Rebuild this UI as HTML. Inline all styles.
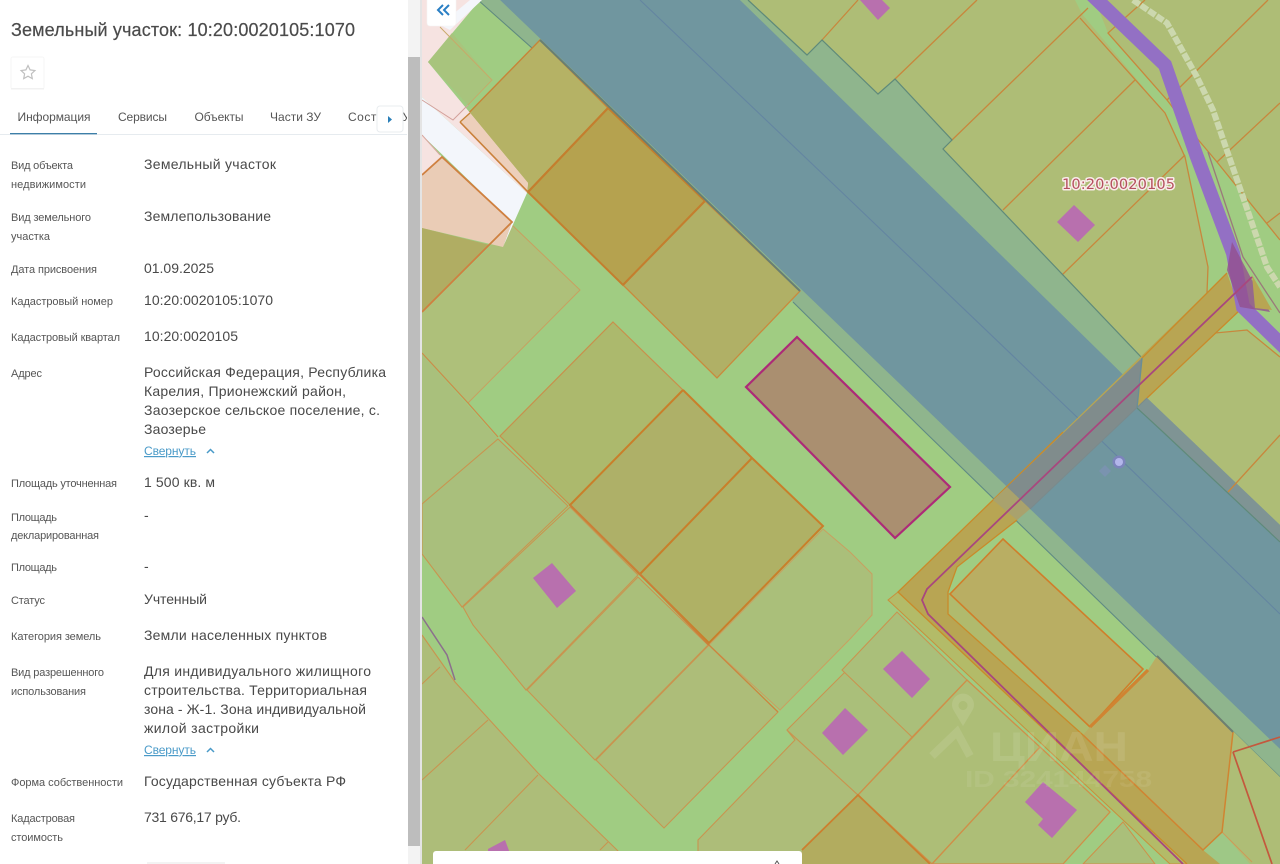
<!DOCTYPE html>
<html lang="ru"><head><meta charset="utf-8"><title>Земельный участок</title>
<style>
html,body{margin:0;padding:0;width:1280px;height:864px;overflow:hidden;background:#fff}
svg{display:block;position:absolute;left:0;top:0}
text{font-family:"Liberation Sans","Noto Sans CJK SC",sans-serif}
.l{font-size:11px;fill:#565656}
.v{font-size:14px;fill:#484848}
.t{font-size:12px;fill:#555}
.a{font-size:12px;fill:#4a9ac8;text-decoration:underline}
</style></head><body>
<svg width="1280" height="864" viewBox="0 0 1280 864" xmlns="http://www.w3.org/2000/svg">
<defs><clipPath id="mc"><rect x="422" y="0" width="858" height="864"/></clipPath>
<clipPath id="tc"><rect x="0" y="100" width="407" height="40"/></clipPath>
<filter id="b" x="0" y="0" width="100%" height="100%"><feGaussianBlur stdDeviation="0.3"/></filter>
<filter id="b2" x="-2%" y="-2%" width="104%" height="104%"><feGaussianBlur stdDeviation="0.25"/></filter></defs>

<g clip-path="url(#mc)"><g filter="url(#b)">
<rect x="422" y="0" width="858" height="864" fill="#a0cc82"/>

<!-- upper right parcels -->
<polygon points="748,0 807,55 822,40 878,94 895,79 952,140 943,149 1142,358 1227,273 1207,293 1208,267 1185,157 1165,113 1082,14 1075,0" fill="#aebd76"/>
<polygon points="1095,0 1280,0 1280,240 1217,162 1190,130 1167,100 1108,33" fill="#aebd76"/>
<polygon points="1147,398 1215,333 1247,330 1280,357 1280,525" fill="#aebd76"/>

<!-- teal strips + blue -->
<polygon points="740,0 748,0 807,55 822,40 878,94 895,79 952,140 943,149 1142,358 1137,408 1147,398 850,107" fill="#8fb58d"/>
<polygon points="478,0 500,0 1280,749 1280,777 925,432 793,302 532,48" fill="#8fb58d"/>
<polygon points="500,0 740,0 850,107 1147,398 1280,525 1280,749" fill="#70969f"/>
<polygon points="1137,408 1147,398 1280,525 1280,542" fill="#7f9494"/>
<polyline points="640,0 850,200 1080,420 1280,614" fill="none" stroke="#6485a1" stroke-width="1.1"/>
<polyline points="478,0 532,48" fill="none" stroke="#5f8a7f" stroke-width="1.1"/>
<polyline points="793,302 925,432 1280,777" fill="none" stroke="#5f8a84" stroke-width="1.1"/>

<!-- upper parcels lines -->
<g fill="none" stroke="#c8873c" stroke-width="1.3">
<polyline points="977,0 895,79"/><polyline points="1088,8 952,140"/><polyline points="1135,80 1003,210"/><polyline points="1185,155 1062,275"/>
<polyline points="1145,0 1108,33 1167,100 1190,130 1217,162 1280,240"/><polyline points="1268,0 1167,100"/><polyline points="1280,103 1217,162"/><polyline points="1280,213 1267,223"/>
<polyline points="858,0 822,40"/>
<polyline points="1080,18 1165,113 1185,157 1208,267 1207,293"/>
<polyline points="1215,333 1247,330 1280,357"/><polyline points="1280,435 1228,492"/>
</g>
<polyline points="1133,0 1167,23 1197,77 1213,110 1243,197 1267,267 1280,287" fill="none" stroke="#ccd8ae" stroke-width="6" stroke-dasharray="8 1.5"/>
<polyline points="748,0 807,55 822,40 878,94 895,79 952,140 943,149 1142,358 1137,408 1163,432 1280,542" fill="none" stroke="#5f8a7a" stroke-width="1.2"/>

<!-- NW row parcels -->
<polygon points="540,40 608,108 528,192 460,122" fill="#b5b265" stroke="#c78438" stroke-width="1.4"/>
<polygon points="608,108 705,201 623,285 528,192" fill="#b5a24f" stroke="#c47e2e" stroke-width="2"/>
<polygon points="705,201 800,291 717,378 623,285" fill="#b0b066" stroke="#c98a3e" stroke-width="1.3"/>
<polyline points="623,285 705,201" fill="none" stroke="#c47e2e" stroke-width="2"/>
<polyline points="528,192 608,108" fill="none" stroke="#c47e2e" stroke-width="2"/>
<polyline points="540,40 800,291" fill="none" stroke="#697f72" stroke-width="2"/>
<polygon points="512,225 580,290 468,403 422,353 422,313" fill="#aec07a"/>
<polyline points="512,225 580,290 468,403" fill="none" stroke="#c8a060" stroke-width="1"/>
<polyline points="422,353 468,403 498,437" fill="none" stroke="#cc8c48" stroke-width="1.2"/>
<polyline points="422,378 433,368" fill="none" stroke="#cc8c48" stroke-width="1"/>

<!-- unloaded tile area -->
<polygon points="422,0 480,0 428,62 528,183 527,193 422,97" fill="#f6e3e1"/>
<polygon points="470,0 482,0 450,30 440,25" fill="#f4f6fb"/>
<polygon points="422,97 527,193 503,247 512,222 422,135" fill="#f3f6fb"/>
<polygon points="422,135 442,157 422,175" fill="#f6e3e1"/>
<polygon points="442,157 512,222 503,247 422,228 422,175" fill="#eaccb6"/>
<polygon points="422,228 490,245 422,312" fill="#b0ad64"/>
<polyline points="422,175 442,157 512,222 422,312" fill="none" stroke="#cf8040" stroke-width="1.8"/>
<polygon points="452,33 492,80 468,105 428,62" fill="#a8c47d"/>
<polyline points="440,27 492,80 468,105" stroke="#c9a868" fill="none" stroke-width=".9"/>
<polyline points="422,100 453,120 468,105" stroke="#d3a09a" fill="none"/>
<polyline points="422,135 440,155" stroke="#d8a8a0" fill="none"/>
<polygon points="460,122 470,113 528,183 527,193" fill="#edcfbb"/>
<polyline points="460,122 528,192" fill="none" stroke="#c9803a" stroke-width="1.6"/>
<polyline points="460,122 470,113" fill="none" stroke="#c78438" stroke-width="1.4"/>

<!-- target -->
<polygon points="797,337 950,487 895,538 746,387" fill="#aa8f6f" stroke="#ad2b78" stroke-width="2.2"/>

<!-- middle parcels -->
<polygon points="613,322 683,390 570,505 500,436" fill="#acb96d" stroke="#c98f4c" stroke-width="1.2"/>
<polygon points="683,390 752,458 640,574 570,505" fill="#aeb067"/>
<polygon points="752,458 823,526 709,643 640,574" fill="#afb165"/>
<g fill="none" stroke="#c97f2c" stroke-width="2">
<polyline points="683,390 752,458 823,526 709,643 570,505 683,390"/>
<polyline points="752,458 640,574"/>
</g>
<polygon points="422,354 498,439 422,504" fill="#a9c07b"/>
<polygon points="498,439 568,506 462,607 422,554 422,504" fill="#a9bf7b" stroke="#c99450" stroke-width="1.1"/>
<polygon points="570,507 638,575 526,690 473,625 463,607" fill="#a9c07b" stroke="#c99450" stroke-width="1.1"/>
<polygon points="638,577 708,645 595,760 527,690" fill="#aabf7a" stroke="#c99450" stroke-width="1.1"/>
<polygon points="709,645 778,712 664,828 596,760" fill="#adbd79" stroke="#c99450" stroke-width="1.1"/>
<polygon points="823,529 850,552 872,574 872,615 850,639 780,710 709,645" fill="#aabf7a" stroke="#c9a060" stroke-width="1"/>
<polyline points="570,505 640,574 709,645" fill="none" stroke="#cb7f38" stroke-width="1.8"/>
<polyline points="709,645 778,712" fill="none" stroke="#cb8640" stroke-width="1.3"/>
<polygon points="552,563 576,591 557,608 533,578" fill="#b86fae"/>

<!-- lower-left -->
<polygon points="422,635 455,682 538,773 617,850 625,864 422,864" fill="#adbd79"/>
<g fill="none" stroke="#c99450" stroke-width="1.1">
<polyline points="422,635 455,682 538,773 617,850 630,864"/><polyline points="422,684 440,667"/><polyline points="422,780 488,720"/><polyline points="465,850 538,775"/><polyline points="600,850 608,842"/>
</g>
<polyline points="422,617 447,655 455,680" fill="none" stroke="#8b6f8d" stroke-width="1.5"/>
<polygon points="488,849 505,840 514,864 488,864" fill="#b86fae"/>

<!-- lower parcels -->
<polygon points="698,840 795,740 787,730 858,795 800,855 800,864 698,864" fill="#adbd79" stroke="#c99450" stroke-width="1.1"/>
<polygon points="787,730 847,670 912,737 858,795" fill="#aabf7a" stroke="#c99450" stroke-width="1.1"/>
<polygon points="842,670 897,612 967,680 912,737" fill="#aabf7a" stroke="#c99450" stroke-width="1.1"/>
<polygon points="967,680 1040,747 932,864 858,795" fill="#adbe77" stroke="#cf8f48" stroke-width="1.3"/>
<polygon points="1040,747 1110,812 1063,864 932,864" fill="#adbe77" stroke="#cf8f48" stroke-width="1.3"/>
<polygon points="1123,822 1083,864 1155,864" fill="#aabf7a" stroke="#cf8f48" stroke-width="1"/>
<polygon points="858,795 930,864 802,864 802,850" fill="#b2ac5f"/>
<polyline points="802,850 858,795 930,864" fill="none" stroke="#cc7f2f" stroke-width="1.8"/>
<polygon points="902,651 930,679 912,698 883,669" fill="#b86fae"/>
<polygon points="845,708 868,730 843,755 822,733" fill="#b86fae"/>
<polygon points="1043,782 1077,810 1052,838 1038,825 1043,819 1025,802" fill="#b86fae"/>
<polygon points="1074,205 1095,225 1078,242 1057,222" fill="#b86fae"/>
<polygon points="860,0 878,20 890,8 882,0" fill="#b86fae"/>

<!-- right lower parcel -->
<polygon points="1233,731 1280,777 1280,864 1215,864 1222,832" fill="#aebd76"/>
<polygon points="1203,850 1222,832 1250,864 1220,864" fill="#9ec886"/>
<polyline points="1222,832 1252,862" fill="none" stroke="#cf9a58" stroke-width="1"/>
<polyline points="1233,752 1280,737" fill="none" stroke="#c4593d" stroke-width="1.7"/>
<polyline points="1233,752 1272,864" fill="none" stroke="#c4593d" stroke-width="1.7"/>

<!-- diagonal band -->
<polygon points="888,600 898,592 1187,864 1170,864" fill="#b3bb68" stroke="#c98f3c" stroke-width="1"/>
<polygon points="948,592 1090,727 1203,850 1083,735 948,614" fill="#b0ba6d"/>
<polygon points="1227,273 1240,310 1017,520 957,567 948,592 948,614 1083,735 1203,850 1220,864 1187,864 898,592" fill="#b8a552"/>
<polygon points="1003,539 1143,669 1090,727 950,594" fill="#b9ae63" stroke="#d07e2a" stroke-width="1.6"/>
<polygon points="1157,656 1233,732 1222,832 1203,850 1083,735 1090,727 1148,670" fill="#b8ae64"/>
<polyline points="1233,732 1222,832 1203,850 1083,735" fill="none" stroke="#d08430" stroke-width="1.5"/>
<polyline points="1090,727 1148,670" fill="none" stroke="#d08430" stroke-width="3.2"/>
<polyline points="1157,656 1233,732" fill="none" stroke="#6e7f70" stroke-width="2"/>
<g fill="none" stroke="#c98a2c" stroke-width="1.3">
<polyline points="1142,358 1227,273"/><polyline points="1147,398 1240,310"/>
<polyline points="1063,432 993,500 898,592 1187,864"/>
<polyline points="1017,520 957,567 948,592 948,614 1083,735"/>
</g>
<polygon points="1123,376 1142,358 1137,408 1030,509 1007,487" fill="#808c8c"/>
<polygon points="1007,487 1030,509 1017,520 993,500" fill="#a9a26d"/>
<polyline points="1147,398 1030,509" fill="none" stroke="#7a8a8c" stroke-width="1"/>
<polyline points="1142,358 1137,408" fill="none" stroke="#6a8d96" stroke-width="1.4"/>

<!-- purple -->
<polyline points="1092,-5 1165,65 1197,157 1233,253 1243,307 1285,348" fill="none" stroke="#9370c4" stroke-width="14"/>
<polygon points="1232,242 1227,270 1240,307 1270,312 1252,280" fill="#94508f" opacity=".8"/>
<polygon points="1252,275 1272,310 1255,308" fill="#b8a552"/>
<polyline points="1208,152 1243,257 1280,313" fill="none" stroke="#9a7a7a" stroke-width="1.3"/>
<polyline points="1252,277 1090,432 927,589 922,600 928,614 1183,864" fill="none" stroke="#a8477e" stroke-width="1.8"/>

<!-- marker -->
<polygon points="1105,465 1111,471 1105,477 1099,471" fill="#7d92b4" opacity=".75"/>
<circle cx="1119" cy="462" r="6.5" fill="#7c84bb"/><circle cx="1119" cy="462" r="4" fill="#b3b6ea"/>

<!-- watermark shapes -->
<path d="M963 726l-9-15a11 11 0 1 1 18 0zM963 701a4.500 4.500 0 1 0 .01 0z" fill="#fff" fill-rule="evenodd" opacity=".11"/>
<polyline points="932,756 957,732 970,756" fill="none" stroke="#fff" stroke-width="8" opacity=".1"/>
</g>
<text x="990" y="761" font-size="42" font-weight="700" fill="#fff" opacity=".09" textLength="138" lengthAdjust="spacingAndGlyphs">ЦИАН</text>
<text x="965" y="787" font-size="23" font-weight="700" fill="#fff" opacity=".07" textLength="187" lengthAdjust="spacingAndGlyphs">ID 324144758</text>
<text x="1062" y="189" font-size="14.6" style="font-family:'DejaVu Sans',sans-serif" fill="#b5505e" stroke="#f8ecea" stroke-width="3" paint-order="stroke" stroke-linejoin="round" textLength="113">10:20:0020105</text>

<!-- white box bottom -->
<rect x="433" y="851" width="369" height="20" rx="3" fill="#fff"/>
<path d="M775 864l2-3 2 3" fill="none" stroke="#555" stroke-width="1"/>
</g>

<!-- left panel -->
<rect x="0" y="0" width="408" height="864" fill="#fff"/>
<rect x="408" y="0" width="12" height="864" fill="#f3f3f3"/>
<rect x="408" y="57" width="12" height="789" fill="#bdbdbd"/>
<rect x="420" y="0" width="2" height="864" fill="#e4e4e4"/>

<!-- collapse button -->
<rect x="427" y="-4" width="29" height="30" rx="3" fill="#fff" stroke="#f3f3f3" stroke-width=".6"/>
<g fill="none" stroke="#2a7fc4" stroke-width="2"><polyline points="443,5 438,10 443,15"/><polyline points="449,5 444,10 449,15"/></g>

<g filter="url(#b2)">
<text x="11" y="36" font-size="18" fill="#4b4b4b" stroke="#4b4b4b" stroke-width=".2" textLength="344">Земельный участок: 10:20:0020105:1070</text>

<rect x="11" y="57" width="33" height="32" rx="2" fill="#fff" stroke="#f6f6f6"/>
<rect x="11" y="88" width="33" height="1.500" fill="#f1f1f1"/>
<path d="M28 65.500l2.100 4.400 4.800.6-3.500 3.300.9 4.800-4.300-2.400-4.300 2.400.9-4.800-3.500-3.300 4.800-.6z" fill="none" stroke="#c0c0c0" stroke-width="1.200"/>

<g clip-path="url(#tc)">
<text class="t" x="17.500" y="121" textLength="73">Информация</text>
<text class="t" x="118" y="121" textLength="49">Сервисы</text>
<text class="t" x="194.500" y="121" textLength="49">Объекты</text>
<text class="t" x="270" y="121" textLength="51">Части ЗУ</text>
<text class="t" x="348" y="121" textLength="62">Состав ЗУ</text>
</g>
<rect x="0" y="134" width="407" height="1" fill="#e6ebef"/>
<rect x="10" y="133" width="87" height="1.300" fill="#3c7fa8"/>
<rect x="377" y="106" width="26" height="26" rx="3" fill="#fff" stroke="#e8ecef"/>
<path d="M388 116l4 3.500-4 3.500z" fill="#2a7fb8"/>

<text class="l" x="11" y="169" textLength="62">Вид объекта</text>
<text class="l" x="11" y="188" textLength="75">недвижимости</text>
<text class="l" x="11" y="221" textLength="80">Вид земельного</text>
<text class="l" x="11" y="240" textLength="39">участка</text>
<text class="l" x="11" y="273" textLength="86">Дата присвоения</text>
<text class="l" x="11" y="305" textLength="102">Кадастровый номер</text>
<text class="l" x="11" y="341" textLength="109">Кадастровый квартал</text>
<text class="l" x="11" y="377" textLength="31">Адрес</text>
<text class="l" x="11" y="487" textLength="106">Площадь уточненная</text>
<text class="l" x="11" y="521" textLength="46">Площадь</text>
<text class="l" x="11" y="539" textLength="88">декларированная</text>
<text class="l" x="11" y="571" textLength="46">Площадь</text>
<text class="l" x="11" y="604" textLength="34">Статус</text>
<text class="l" x="11" y="640" textLength="90">Категория земель</text>
<text class="l" x="11" y="676" textLength="93">Вид разрешенного</text>
<text class="l" x="11" y="695" textLength="75">использования</text>
<text class="l" x="11" y="786" textLength="112">Форма собственности</text>
<text class="l" x="11" y="822" textLength="64">Кадастровая</text>
<text class="l" x="11" y="841" textLength="52">стоимость</text>

<text class="v" x="144" y="169" textLength="132">Земельный участок</text>
<text class="v" x="144" y="221" textLength="127">Землепользование</text>
<text class="v" x="144" y="273" textLength="70">01.09.2025</text>
<text class="v" x="144" y="305" textLength="129">10:20:0020105:1070</text>
<text class="v" x="144" y="341" textLength="94">10:20:0020105</text>
<text class="v" x="144" y="377" textLength="242">Российская Федерация, Республика</text>
<text class="v" x="144" y="396" textLength="202">Карелия, Прионежский район,</text>
<text class="v" x="144" y="415" textLength="236">Заозерское сельское поселение, с.</text>
<text class="v" x="144" y="434" textLength="62">Заозерье</text>
<text class="a" x="144" y="455" textLength="52">Свернуть</text>
<path d="M207 453l3.500-3.500 3.500 3.500" fill="none" stroke="#4a9ac8" stroke-width="1.500"/>
<text class="v" x="144" y="487" textLength="71">1 500 кв. м</text>
<text class="v" x="144" y="520">-</text>
<text class="v" x="144" y="571">-</text>
<text class="v" x="144" y="604" textLength="63">Учтенный</text>
<text class="v" x="144" y="640" textLength="183">Земли населенных пунктов</text>
<text class="v" x="144" y="676" textLength="227">Для индивидуального жилищного</text>
<text class="v" x="144" y="695" textLength="223">строительства. Территориальная</text>
<text class="v" x="144" y="714" textLength="222">зона - Ж-1. Зона индивидуальной</text>
<text class="v" x="144" y="733" textLength="115">жилой застройки</text>
<text class="a" x="144" y="754" textLength="52">Свернуть</text>
<path d="M207 752l3.500-3.500 3.500 3.500" fill="none" stroke="#4a9ac8" stroke-width="1.500"/>
<text class="v" x="144" y="786" textLength="202">Государственная субъекта РФ</text>
<text class="v" x="144" y="822" textLength="97">731 676,17 руб.</text>
<rect x="147" y="862" width="78" height="2" fill="#f3f3f3"/>
</g>
</svg>
</body></html>
